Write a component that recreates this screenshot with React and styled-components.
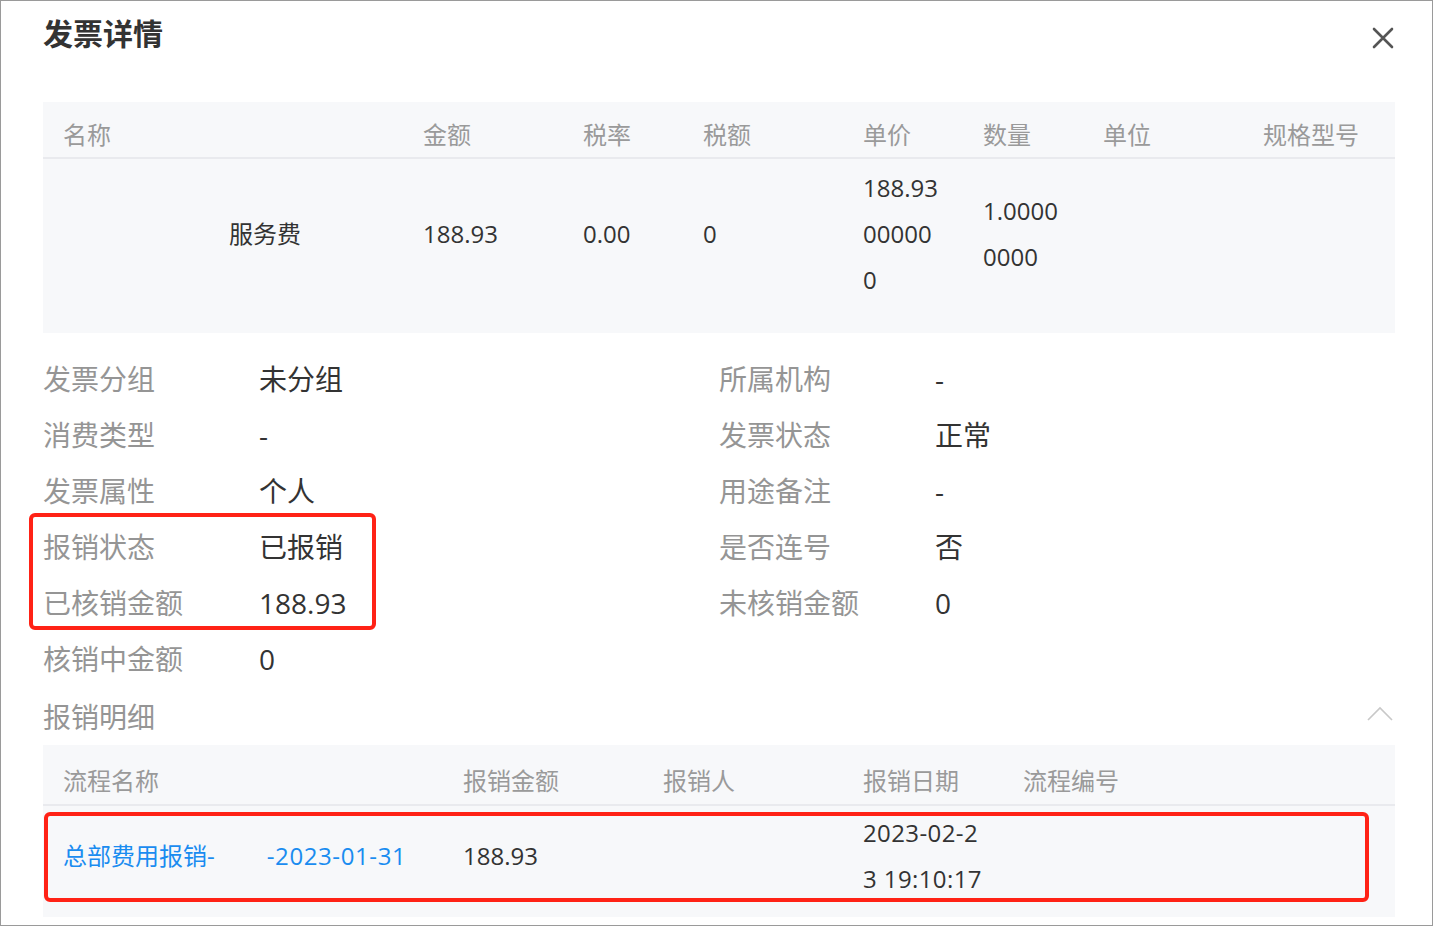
import React from "react";
import styled, { createGlobalStyle } from "styled-components";

const GlobalStyle = createGlobalStyle`
  body {
    margin: 0;
    background: #fff;
    font-family: "Open Sans", "Noto Sans CJK SC", sans-serif;
  }
`;

const Frame = styled.div`
  position: relative;
  box-sizing: border-box;
  width: 1433px;
  height: 926px;
  border: 1px solid #9a9a9a;
  padding: 0 37px 0 42px;
  overflow: hidden;
  background: #fff;
`;

const Header = styled.div`
  display: flex;
  justify-content: space-between;
  align-items: flex-start;
  height: 101px;
  padding-top: 13px;
  box-sizing: border-box;
`;

const Title = styled.h2`
  margin: 0;
  font-size: 30px;
  line-height: 40px;
  font-weight: 700;
  color: #333;
`;

const CloseButton = styled.button`
  border: 0;
  background: none;
  padding: 0;
  margin: 12px 0 0 0;
  width: 24px;
  height: 24px;
  cursor: pointer;
  svg {
    display: block;
  }
`;

const Table = styled.div`
  background: #f7f8fa;
  padding-bottom: ${(p) => p.$bottom || 0}px;
`;

const Row = styled.div`
  display: grid;
  grid-template-columns: ${(p) => p.$cols};
  align-items: center;
  border-bottom: ${(p) => (p.$head ? "2px solid #e9eaee" : "none")};
`;

const Cell = styled.div`
  box-sizing: border-box;
  padding: ${(p) => p.$pad || "6px 20px 10px"};
  padding-left: ${(p) => (p.$indent ? p.$indent : 20)}px;
  font-size: 24px;
  line-height: ${(p) => p.$lh || 46}px;
  color: ${(p) => (p.$head ? "#9a9a9a" : "#333")};
  word-break: break-all;
`;

const LinkText = styled.a`
  color: #1a8cf0;
  text-decoration: none;
  cursor: pointer;
  span + span {
    margin-left: 52px;
    letter-spacing: 0.6px;
  }
`;

const DateText = styled.span`
  letter-spacing: 0.4px;
`;

const InfoGrid = styled.div`
  display: grid;
  grid-template-columns: 676px 1fr;
  margin-top: 18px;
`;

const InfoItem = styled.div`
  display: flex;
  font-size: 28px;
  line-height: 56px;
`;

const Label = styled.span`
  width: 216px;
  flex: none;
  color: #959595;
`;

const Value = styled.span`
  color: #333;
`;

const SectionTitle = styled.div`
  display: flex;
  justify-content: space-between;
  align-items: center;
  height: 58px;
  padding-bottom: 1px;
  box-sizing: border-box;
  font-size: 28px;
  color: #959595;
  svg {
    margin-right: 2px;
    margin-top: -4px;
  }
`;

const Mark = styled.div`
  position: absolute;
  box-sizing: border-box;
  border: 4px solid #ff2216;
  border-radius: 6px;
  pointer-events: none;
`;

const invoiceCols = "360px 160px 120px 160px 120px 120px 160px 1fr";
const claimCols = "400px 200px 200px 160px 1fr";

const invoiceHead = ["名称", "金额", "税率", "税额", "单价", "数量", "单位", "规格型号"];
const invoiceRow = ["服务费", "188.93", "0.00", "0", "188.93000000", "1.00000000", "", ""];

const info = [
  ["发票分组", "未分组", "所属机构", "-"],
  ["消费类型", "-", "发票状态", "正常"],
  ["发票属性", "个人", "用途备注", "-"],
  ["报销状态", "已报销", "是否连号", "否"],
  ["已核销金额", "188.93", "未核销金额", "0"],
  ["核销中金额", "0"],
];

const claimHead = ["流程名称", "报销金额", "报销人", "报销日期", "流程编号"];

export default function App() {
  return (
    <>
      <GlobalStyle />
      <Frame>
        <Header>
          <Title>发票详情</Title>
          <CloseButton aria-label="close">
            <svg width="24" height="24" viewBox="0 0 24 24">
              <path d="M3 3 L21 21 M21 3 L3 21" stroke="#555" strokeWidth="2.6" strokeLinecap="round" />
            </svg>
          </CloseButton>
        </Header>

        <Table $bottom={20}>
          <Row $cols={invoiceCols} $head>
            {invoiceHead.map((h) => (
              <Cell key={h} $head $pad="10px 20px 0" $lh={45}>
                {h}
              </Cell>
            ))}
          </Row>
          <Row $cols={invoiceCols}>
            {invoiceRow.map((v, i) => (
              <Cell key={i} $indent={i === 0 ? 186 : 0}>
                {v}
              </Cell>
            ))}
          </Row>
        </Table>

        <InfoGrid>
          {info.map((r) => (
            <React.Fragment key={r[0]}>
              <InfoItem>
                <Label>{r[0]}</Label>
                <Value>{r[1]}</Value>
              </InfoItem>
              <InfoItem>
                {r[2] && <Label>{r[2]}</Label>}
                {r[3] && <Value>{r[3]}</Value>}
              </InfoItem>
            </React.Fragment>
          ))}
        </InfoGrid>

        <SectionTitle>
          <span>报销明细</span>
          <svg width="26" height="15" viewBox="0 0 26 15">
            <path d="M1 14 L13 2 L25 14" fill="none" stroke="#c8c8c8" strokeWidth="1.6" />
          </svg>
        </SectionTitle>

        <Table $bottom={3}>
          <Row $cols={claimCols} $head>
            {claimHead.map((h) => (
              <Cell key={h} $head $pad="13px 20px 0" $lh={46}>
                {h}
              </Cell>
            ))}
          </Row>
          <Row $cols={claimCols}>
            <Cell $pad="4px 20px 12px">
              <LinkText>
                <span>总部费用报销-</span>
                <span>-2023-01-31</span>
              </LinkText>
            </Cell>
            <Cell $pad="4px 20px 12px">188.93</Cell>
            <Cell $pad="4px 20px 12px"></Cell>
            <Cell $pad="4px 20px 12px">
              <DateText>2023-02-23 19:10:17</DateText>
            </Cell>
            <Cell $pad="4px 20px 12px"></Cell>
          </Row>
        </Table>

        <Mark style={{ left: 28, top: 512, width: 347, height: 117 }} />
        <Mark style={{ left: 43, top: 811, width: 1325, height: 90 }} />
      </Frame>
    </>
  );
}
